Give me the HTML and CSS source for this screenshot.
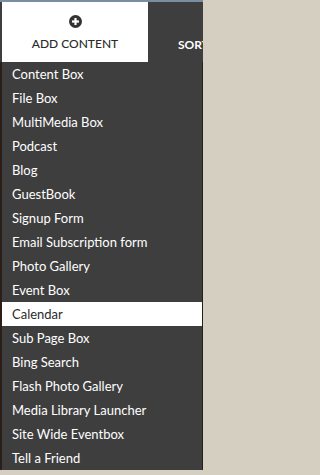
FILE: index.html
```html
<!DOCTYPE html>
<html>
<head>
<meta charset="utf-8">
<link rel="stylesheet" href="styles.css">
</head>
<body>
<div class="topline"></div>
<div class="header">
  <div class="tab">
    <svg class="plus" width="13" height="13" viewBox="0 0 13 13"><circle cx="6.5" cy="6.5" r="6.5" fill="#333"/><rect x="5.4" y="3" width="2.2" height="7" fill="#fff"/><rect x="3" y="5.4" width="7" height="2.2" fill="#fff"/></svg>
    <span class="tab-label">ADD CONTENT</span>
  </div>
  <div class="nav-item">SORT</div>
</div>
<div class="below">
  <ul class="menu">
    <li>Content Box</li>
    <li>File Box</li>
    <li>MultiMedia Box</li>
    <li>Podcast</li>
    <li>Blog</li>
    <li>GuestBook</li>
    <li>Signup Form</li>
    <li>Email Subscription form</li>
    <li>Photo Gallery</li>
    <li>Event Box</li>
    <li class="active">Calendar</li>
    <li>Sub Page Box</li>
    <li>Bing Search</li>
    <li>Flash Photo Gallery</li>
    <li>Media Library Launcher</li>
    <li>Site Wide Eventbox</li>
    <li>Tell a Friend</li>
  </ul>
</div>
</body>
</html>
```
FILE: styles.css
```css
html, body {
  margin: 0;
  padding: 0;
}
body {
  background: #d5cfc1;
  font-family: Lato, "Open Sans", sans-serif;
  width: 203px;
  height: 475px;
  overflow: hidden;
}
.topline {
  height: 2px;
  background: #7c8ca4;
}
.header {
  display: flex;
  height: 60px;
  background: #3e3e3e;
  padding-left: 2px;
  overflow: hidden;
  white-space: nowrap;
}
.tab {
  width: 146px;
  flex: none;
  background: #ffffff;
  display: flex;
  flex-direction: column;
  align-items: center;
  padding-top: 13px;
  box-sizing: border-box;
}
.plus {
  display: block;
}
.tab-label {
  margin-top: 8px;
  font-size: 12px;
  font-weight: 500;
  color: #2b2b2b;
  letter-spacing: 0;
}
.nav-item {
  padding-left: 30px;
  padding-top: 35px;
  font-size: 12px;
  font-weight: 700;
  color: #ffffff;
}
.below {
  background: #2a1f18;
  padding-left: 2px;
}
.menu {
  list-style: none;
  margin: 0;
  padding: 0;
  width: 200px;
  background: #3e3e3e;
}
.menu li {
  height: 24px;
  line-height: 24px;
  padding-left: 10px;
  font-size: 13px;
  color: #ffffff;
}
.menu li.active {
  background: #ffffff;
  color: #2b2b2b;
}
```
